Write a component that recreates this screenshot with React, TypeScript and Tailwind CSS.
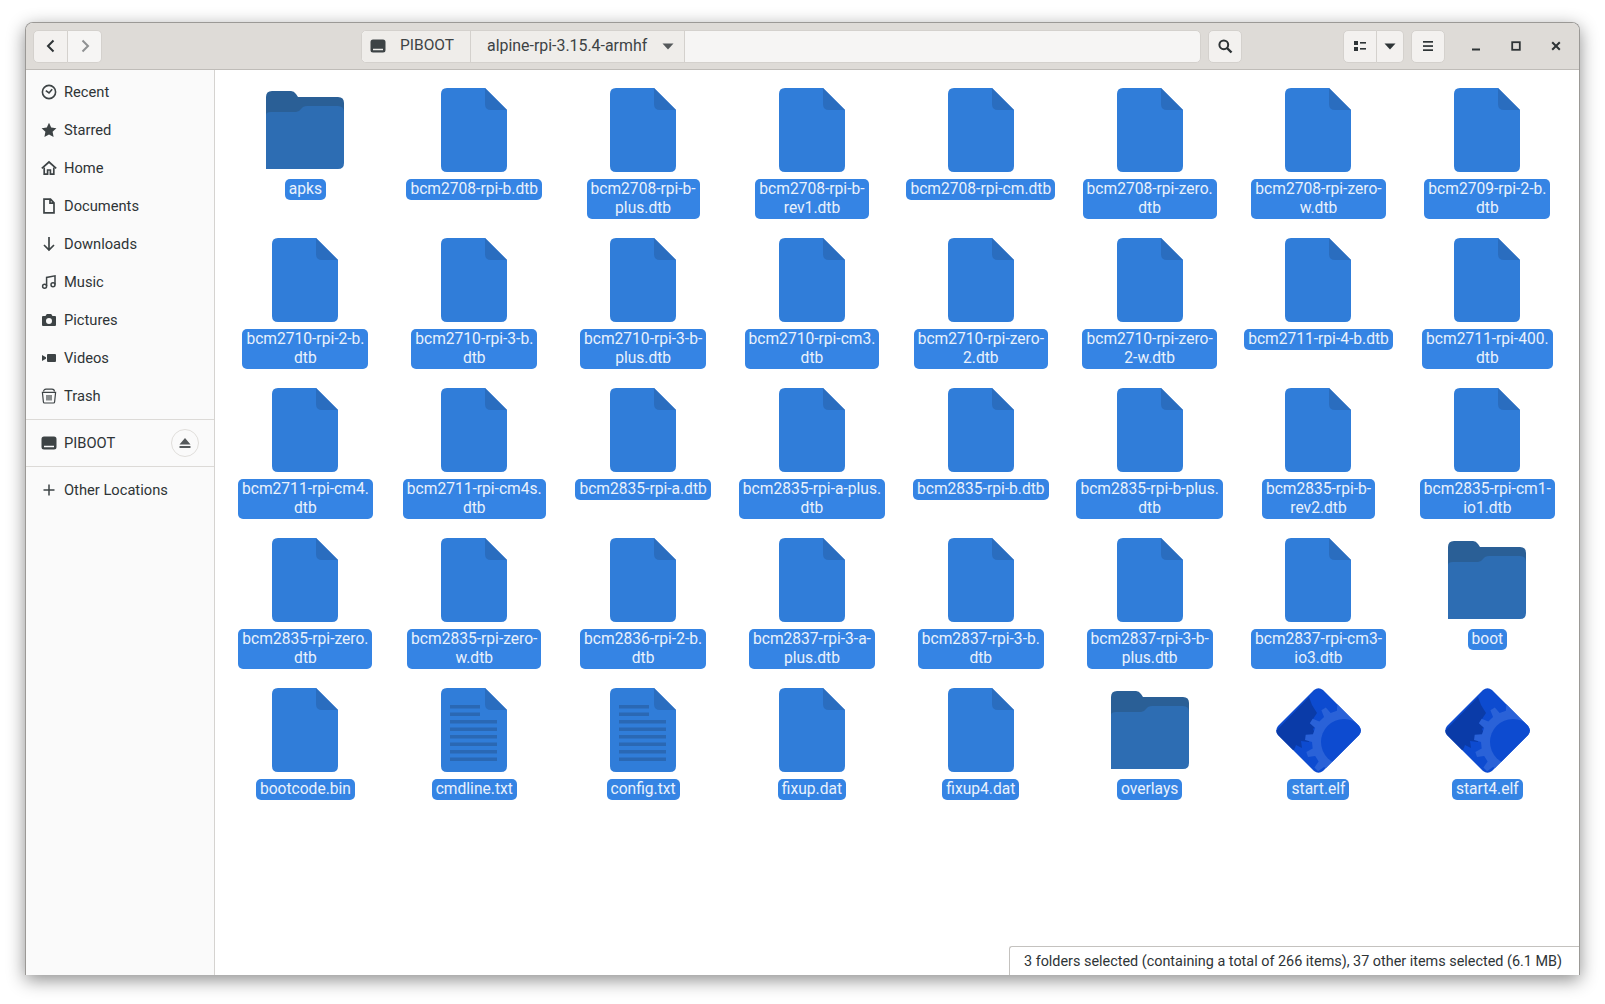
import React from "react";

type Kind = "file" | "folder" | "text" | "elf";

const items: [string, Kind][] = [
  ["apks", "folder"],
  ["bcm2708-rpi-b.dtb", "file"],
  ["bcm2708-rpi-b-\nplus.dtb", "file"],
  ["bcm2708-rpi-b-\nrev1.dtb", "file"],
  ["bcm2708-rpi-cm.dtb", "file"],
  ["bcm2708-rpi-zero.\ndtb", "file"],
  ["bcm2708-rpi-zero-\nw.dtb", "file"],
  ["bcm2709-rpi-2-b.\ndtb", "file"],
  ["bcm2710-rpi-2-b.\ndtb", "file"],
  ["bcm2710-rpi-3-b.\ndtb", "file"],
  ["bcm2710-rpi-3-b-\nplus.dtb", "file"],
  ["bcm2710-rpi-cm3.\ndtb", "file"],
  ["bcm2710-rpi-zero-\n2.dtb", "file"],
  ["bcm2710-rpi-zero-\n2-w.dtb", "file"],
  ["bcm2711-rpi-4-b.dtb", "file"],
  ["bcm2711-rpi-400.\ndtb", "file"],
  ["bcm2711-rpi-cm4.\ndtb", "file"],
  ["bcm2711-rpi-cm4s.\ndtb", "file"],
  ["bcm2835-rpi-a.dtb", "file"],
  ["bcm2835-rpi-a-plus.\ndtb", "file"],
  ["bcm2835-rpi-b.dtb", "file"],
  ["bcm2835-rpi-b-plus.\ndtb", "file"],
  ["bcm2835-rpi-b-\nrev2.dtb", "file"],
  ["bcm2835-rpi-cm1-\nio1.dtb", "file"],
  ["bcm2835-rpi-zero.\ndtb", "file"],
  ["bcm2835-rpi-zero-\nw.dtb", "file"],
  ["bcm2836-rpi-2-b.\ndtb", "file"],
  ["bcm2837-rpi-3-a-\nplus.dtb", "file"],
  ["bcm2837-rpi-3-b.\ndtb", "file"],
  ["bcm2837-rpi-3-b-\nplus.dtb", "file"],
  ["bcm2837-rpi-cm3-\nio3.dtb", "file"],
  ["boot", "folder"],
  ["bootcode.bin", "file"],
  ["cmdline.txt", "text"],
  ["config.txt", "text"],
  ["fixup.dat", "file"],
  ["fixup4.dat", "file"],
  ["overlays", "folder"],
  ["start.elf", "elf"],
  ["start4.elf", "elf"],
];

function FileIcon({ lines }: { lines?: boolean }) {
  return (
    <svg width="66" height="84" viewBox="0 0 66 84">
      <path d="M6 0H44L66 22V78Q66 84 60 84H6Q0 84 0 78V6Q0 0 6 0Z" fill="#307dd9" />
      <path d="M44 0L66 22H50Q44 22 44 16Z" fill="#2a6dbf" />
      {lines &&
        [17, 24.5, 32, 39.5, 47, 54.5, 62, 69.5].map((y, i) => (
          <rect key={y} x="9" y={y} width={i < 2 ? 30 : 47} height="3.5" fill="#2a68b4" />
        ))}
    </svg>
  );
}

function FolderIcon() {
  return (
    <svg width="78" height="78" viewBox="0 0 78 78">
      <path d="M0 6Q0 0 6 0H25Q28 0 30 3L32 6H72Q78 6 78 12V40H0Z" fill="#2a5f96" />
      <path d="M0 24Q0 21 5 21H30Q33 21 35 18Q37 15 41 15H72Q78 15 78 21V72Q78 78 72 78H0Z" fill="#2d6db3" />
    </svg>
  );
}

function gearPath(cx: number, cy: number, outer: number, inner: number, teeth: number) {
  const pts: string[] = [];
  const step = (Math.PI * 2) / teeth;
  for (let i = 0; i < teeth; i++) {
    const a = i * step;
    const corners: [number, number][] = [
      [inner, a],
      [outer, a + step * 0.12],
      [outer, a + step * 0.42],
      [inner, a + step * 0.54],
    ];
    corners.forEach(([r, t]) => pts.push(`${cx + r * Math.cos(t)},${cy + r * Math.sin(t)}`));
  }
  return pts.join(" ");
}

const DIAMOND = "M38 2Q42.5 -1.5 47 2L83 38Q86.5 42.5 83 47L47 83Q42.5 86.5 38 83L2 47Q-1.5 42.5 2 38Z";

function ElfIcon() {
  return (
    <svg width="85" height="85" viewBox="0 0 85 85">
      <defs>
        <clipPath id="elf-clip">
          <path d={DIAMOND} />
        </clipPath>
      </defs>
      <g clipPath="url(#elf-clip)">
        <rect width="85" height="85" fill="#0d4bd0" />
        <polygon
          points="0,43 33,9 36,17 41,25 37,31 41,37 37,41 40,47 32,47 33,54 25,53 26,60 20,57 18,62 0,62"
          fill="#0a3ba8"
        />
        <polygon points={gearPath(68, 54, 39, 32, 14)} fill="#2a62d8" />
        <circle cx="68" cy="54" r="23" fill="#0d4bd0" />
      </g>
    </svg>
  );
}

function ItemIcon({ kind }: { kind: Kind }) {
  if (kind === "folder") return <FolderIcon />;
  if (kind === "elf") return <ElfIcon />;
  return <FileIcon lines={kind === "text"} />;
}

function Item({ name, kind }: { name: string; kind: Kind }) {
  return (
    <div className="flex flex-col items-center">
      <div className="flex h-[84px] items-center justify-center">
        <ItemIcon kind={kind} />
      </div>
      <div className="mt-[7px] whitespace-pre rounded-[5px] bg-[#3584e4] px-[4px] py-[1px] text-center text-[15.6px] leading-[19px] text-[#e9f1fc]">
        {name}
      </div>
    </div>
  );
}

const glyph = "#3d4345";

const sideIcons: Record<string, React.ReactNode> = {
  Recent: (
    <g fill="none" stroke={glyph} strokeWidth="1.6">
      <circle cx="8" cy="8" r="6.6" />
      <path d="M4.8 6.6L8 9L11.2 5.2" />
    </g>
  ),
  Starred: <path d="M8 .8L10.2 5.6L15.4 6.2L11.6 9.8L12.6 15L8 12.4L3.4 15L4.4 9.8L.6 6.2L5.8 5.6Z" fill={glyph} />,
  Home: (
    <g fill="none" stroke={glyph} strokeWidth="1.7">
      <path d="M.8 8.4L8 2L15.2 8.4" />
      <path d="M3.2 7.5V14.2H6.6V10H9.4V14.2H12.8V7.5" />
    </g>
  ),
  Documents: <path d="M3 1.2H9.5L13 4.8V14.8H3Z M9 1.6V5.2H12.6" fill="none" stroke={glyph} strokeWidth="1.7" />,
  Downloads: <path d="M8 1V14M3 9L8 14L13 9" fill="none" stroke={glyph} strokeWidth="1.7" />,
  Music: (
    <g fill="none" stroke={glyph} strokeWidth="1.5">
      <path d="M5.6 12V3.4L14 1.8V10.6" />
      <circle cx="3.6" cy="12.2" r="2" />
      <circle cx="12" cy="10.8" r="2" />
    </g>
  ),
  Pictures: (
    <path
      fillRule="evenodd"
      d="M2 4H4.5L5.8 2H10.2L11.5 4H14Q15 4 15 5V13Q15 14 14 14H2Q1 14 1 13V5Q1 4 2 4ZM8 6A3 3 0 1 0 8 12A3 3 0 1 0 8 6Z"
      fill={glyph}
    />
  ),
  Videos: (
    <g fill={glyph}>
      <rect x="6" y="4" width="9" height="8" rx="1" />
      <path d="M1 5L5 7.2V8.8L1 11Z" />
    </g>
  ),
  Trash: (
    <g fill="none" stroke={glyph} strokeWidth="1.2">
      <path d="M1.4 4.4H14.6L13.6 14Q13.5 15 12.5 15H3.5Q2.5 15 2.4 14Z" />
      <path d="M2.6 3.6Q2.6 1.2 5 1.2H11Q13.4 1.2 13.4 3.6M6 7V12.5M8 7V12.5M10 7V12.5" />
    </g>
  ),
  Drive: (
    <path
      fillRule="evenodd"
      d="M3 1.5H13Q15.5 1.5 15.5 4V12Q15.5 14.5 13 14.5H3Q.5 14.5 .5 12V4Q.5 1.5 3 1.5ZM3 10.8V12.2H13V10.8Z"
      fill={glyph}
    />
  ),
  Plus: <path d="M8 2.5V13.5M2.5 8H13.5" fill="none" stroke={glyph} strokeWidth="1.5" />,
};

function Glyph({ name }: { name: string }) {
  return (
    <svg width="16" height="16" viewBox="0 0 16 16" className="shrink-0">
      {sideIcons[name]}
    </svg>
  );
}

function SideRow({ icon, label, children }: { icon: string; label: string; children?: React.ReactNode }) {
  return (
    <div className="flex h-[38px] items-center gap-[7px] pl-[15px] pr-[15px]">
      <Glyph name={icon} />
      <span className="flex-1">{label}</span>
      {children}
    </div>
  );
}

function Sidebar() {
  return (
    <aside className="flex w-[189px] shrink-0 flex-col border-r border-[#d5d3d0] bg-[#fafafa] pt-[3px] text-[14.7px] text-[#2e3436]">
      {["Recent", "Starred", "Home", "Documents", "Downloads", "Music", "Pictures", "Videos", "Trash"].map((n) => (
        <SideRow key={n} icon={n} label={n} />
      ))}
      <div className="mt-[4px] border-t border-[#dcdad7] pt-[4px]">
        <SideRow icon="Drive" label="PIBOOT">
          <div className="flex h-[28px] w-[28px] items-center justify-center rounded-full border border-[#e0dedb]">
            <svg width="14" height="14" viewBox="0 0 14 14">
              <path d="M7 2L12.5 8.5H1.5Z M1.5 10H12.5V12H1.5Z" fill="#55595b" />
            </svg>
          </div>
        </SideRow>
      </div>
      <div className="mt-[4px] border-t border-[#dcdad7] pt-[4px]">
        <SideRow icon="Plus" label="Other Locations" />
      </div>
    </aside>
  );
}

function Header() {
  const btn = "flex items-center justify-center border border-[#d4d1cd] bg-[#f3f1ef]";
  return (
    <header className="flex h-[47px] shrink-0 items-center border-b border-[#bfbcb8] bg-[#dedbd7] pl-[7px] text-[15.5px] text-[#2e3436]">
      <div className="flex h-[33px] w-[69px]">
        <div className={`${btn} flex-1 rounded-l-[5px]`}>
          <svg width="16" height="16" viewBox="0 0 16 16">
            <path d="M10.5 2.5L5 8L10.5 13.5" fill="none" stroke="#2e3436" strokeWidth="2" />
          </svg>
        </div>
        <div className={`${btn} flex-1 rounded-r-[5px] border-l-0 bg-[#f6f5f4]`}>
          <svg width="16" height="16" viewBox="0 0 16 16">
            <path d="M5.5 2.5L11 8L5.5 13.5" fill="none" stroke="#8f9192" strokeWidth="2" />
          </svg>
        </div>
      </div>
      <div className="ml-[259px] flex h-[33px] w-[840px] rounded-[5px] border border-[#d4d1cd] bg-[#f6f5f4]">
        <div className="flex w-[109px] items-center gap-[14px] rounded-l-[5px] border-r border-[#d4d1cd] bg-[#efedea] pl-[8px]">
          <Glyph name="Drive" />
          <span className="text-[#3d4345]">PIBOOT</span>
        </div>
        <div className="flex w-[214px] items-center justify-between border-r border-[#d4d1cd] bg-[#efedea] pl-[16px] pr-[10px]">
          <span className="text-[15.9px] text-[#3d4345]">alpine-rpi-3.15.4-armhf</span>
          <svg width="12" height="7" viewBox="0 0 12 7">
            <path d="M0.5 0.5H11.5L6 6.5Z" fill="#55595b" />
          </svg>
        </div>
      </div>
      <div className={`${btn} ml-[7px] h-[33px] w-[34px] rounded-[5px]`}>
        <svg width="16" height="16" viewBox="0 0 16 16">
          <circle cx="6.8" cy="6.8" r="4.4" fill="none" stroke="#2e3436" strokeWidth="2" />
          <path d="M10 10L14.5 14.5" stroke="#2e3436" strokeWidth="2.4" />
        </svg>
      </div>
      <div className="ml-[101px] flex h-[33px] w-[61px]">
        <div className={`${btn} w-[34px] rounded-l-[5px]`}>
          <svg width="14" height="14" viewBox="0 0 14 14" fill="#2e3436">
            <rect x="1" y="2" width="4" height="4" />
            <rect x="1" y="8" width="4" height="4" />
            <rect x="7" y="3" width="6" height="1.6" />
            <rect x="7" y="9" width="6" height="1.6" />
          </svg>
        </div>
        <div className={`${btn} flex-1 rounded-r-[5px] border-l-0`}>
          <svg width="12" height="7" viewBox="0 0 12 7">
            <path d="M0.5 0.5H11.5L6 6.5Z" fill="#2e3436" />
          </svg>
        </div>
      </div>
      <div className={`${btn} ml-[7px] h-[33px] w-[34px] rounded-[5px]`}>
        <svg width="12" height="12" viewBox="0 0 12 12" fill="#2e3436">
          <rect x="1" y="1" width="10" height="1.7" />
          <rect x="1" y="5.2" width="10" height="1.7" />
          <rect x="1" y="9.3" width="10" height="1.7" />
        </svg>
      </div>
      <div className="ml-[25px] flex w-[92px] items-center justify-between">
        <svg width="12" height="12" viewBox="0 0 12 12">
          <rect x="2" y="8.5" width="8" height="2" fill="#2e3436" />
        </svg>
        <svg width="12" height="12" viewBox="0 0 12 12">
          <rect x="2.2" y="2.2" width="7.6" height="7.6" fill="none" stroke="#2e3436" strokeWidth="1.8" />
        </svg>
        <svg width="12" height="12" viewBox="0 0 12 12">
          <path d="M2.2 2.2L9.8 9.8M9.8 2.2L2.2 9.8" stroke="#2e3436" strokeWidth="2" />
        </svg>
      </div>
    </header>
  );
}

export default function App() {
  return (
    <div className="h-[1004px] w-[1605px] bg-white pl-[25px] pt-[22px] [font-family:'Roboto','Noto_Sans',sans-serif]">
      <div className="relative flex h-[953px] w-[1555px] flex-col overflow-hidden rounded-t-[8px] border border-b-0 border-[#9b9996] bg-white shadow-[0_5px_18px_rgba(0,0,0,0.45)]">
        <Header />
        <div className="flex min-h-0 flex-1">
          <Sidebar />
          <main className="grid flex-1 auto-rows-[150px] grid-cols-[repeat(8,168.85px)] content-start bg-white pl-[6px] pt-[18px]">
            {items.map(([name, kind], i) => (
              <Item key={i} name={name} kind={kind} />
            ))}
          </main>
        </div>
        <div className="absolute bottom-0 right-0 flex h-[29px] w-[570px] items-center whitespace-nowrap rounded-tl-[3px] border-l border-t border-[#c4c2bf] bg-white pl-[14px] pt-[2px] text-[14.4px] text-[#2e3436]">
          3 folders selected (containing a total of 266 items), 37 other items selected (6.1 MB)
        </div>
      </div>
    </div>
  );
}
